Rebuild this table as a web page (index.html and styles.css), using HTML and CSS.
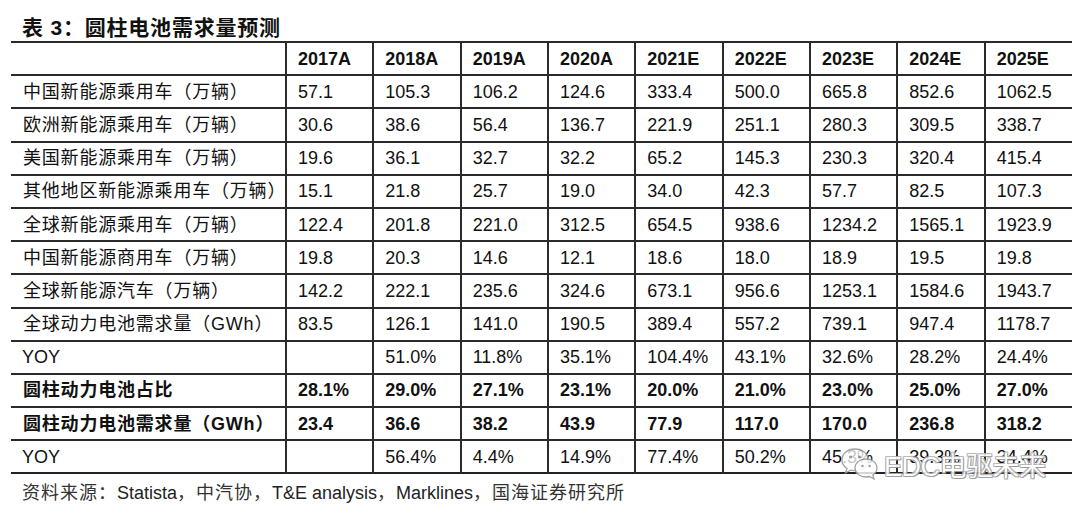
FILE: index.html
```html
<!DOCTYPE html>
<html lang="zh">
<head>
<meta charset="utf-8">
<link rel="stylesheet" href="styles.css">
</head>
<body>
<div class="page">
  <div class="title">表 3：圆柱电池需求量预测</div>
  <table class="data">
    <colgroup>
      <col class="c-label">
      <col><col><col><col><col><col><col><col><col>
    </colgroup>
    <tr class="bold">
      <td></td><td>2017A</td><td>2018A</td><td>2019A</td><td>2020A</td><td>2021E</td><td>2022E</td><td>2023E</td><td>2024E</td><td>2025E</td>
    </tr>
    <tr><td class="label">中国新能源乘用车（万辆）</td><td>57.1</td><td>105.3</td><td>106.2</td><td>124.6</td><td>333.4</td><td>500.0</td><td>665.8</td><td>852.6</td><td>1062.5</td></tr>
    <tr><td class="label">欧洲新能源乘用车（万辆）</td><td>30.6</td><td>38.6</td><td>56.4</td><td>136.7</td><td>221.9</td><td>251.1</td><td>280.3</td><td>309.5</td><td>338.7</td></tr>
    <tr><td class="label">美国新能源乘用车（万辆）</td><td>19.6</td><td>36.1</td><td>32.7</td><td>32.2</td><td>65.2</td><td>145.3</td><td>230.3</td><td>320.4</td><td>415.4</td></tr>
    <tr><td class="label">其他地区新能源乘用车（万辆）</td><td>15.1</td><td>21.8</td><td>25.7</td><td>19.0</td><td>34.0</td><td>42.3</td><td>57.7</td><td>82.5</td><td>107.3</td></tr>
    <tr><td class="label">全球新能源乘用车（万辆）</td><td>122.4</td><td>201.8</td><td>221.0</td><td>312.5</td><td>654.5</td><td>938.6</td><td>1234.2</td><td>1565.1</td><td>1923.9</td></tr>
    <tr><td class="label">中国新能源商用车（万辆）</td><td>19.8</td><td>20.3</td><td>14.6</td><td>12.1</td><td>18.6</td><td>18.0</td><td>18.9</td><td>19.5</td><td>19.8</td></tr>
    <tr><td class="label">全球新能源汽车（万辆）</td><td>142.2</td><td>222.1</td><td>235.6</td><td>324.6</td><td>673.1</td><td>956.6</td><td>1253.1</td><td>1584.6</td><td>1943.7</td></tr>
    <tr><td class="label">全球动力电池需求量（GWh）</td><td>83.5</td><td>126.1</td><td>141.0</td><td>190.5</td><td>389.4</td><td>557.2</td><td>739.1</td><td>947.4</td><td>1178.7</td></tr>
    <tr><td>YOY</td><td></td><td>51.0%</td><td>11.8%</td><td>35.1%</td><td>104.4%</td><td>43.1%</td><td>32.6%</td><td>28.2%</td><td>24.4%</td></tr>
    <tr class="bold"><td class="label">圆柱动力电池占比</td><td>28.1%</td><td>29.0%</td><td>27.1%</td><td>23.1%</td><td>20.0%</td><td>21.0%</td><td>23.0%</td><td>25.0%</td><td>27.0%</td></tr>
    <tr class="bold"><td class="label">圆柱动力电池需求量（GWh）</td><td>23.4</td><td>36.6</td><td>38.2</td><td>43.9</td><td>77.9</td><td>117.0</td><td>170.0</td><td>236.8</td><td>318.2</td></tr>
    <tr><td>YOY</td><td></td><td>56.4%</td><td>4.4%</td><td>14.9%</td><td>77.4%</td><td>50.2%</td><td>45.3%</td><td>39.3%</td><td>34.4%</td></tr>
  </table>
  <div class="source"><span class="cjk">资料来源：</span>Statista<span class="cjk">，中汽协，</span>T&amp;E analysis<span class="cjk">，</span>Marklines<span class="cjk">，国海证券研究所</span></div>

  <div class="watermark">
    <svg class="wm-icon" width="40" height="36" viewBox="0 0 40 36">
      <path d="M15 3 C7 3 2 8 2 14 C2 17.5 4 20.5 7 22.5 L5.5 27 L11 24 C12.3 24.4 13.6 24.6 15 24.6 C23 24.6 28 19.6 28 14 C28 8 23 3 15 3 Z" fill="#fff" fill-opacity="0.85" stroke="#999" stroke-width="1.3"/>
      <path d="M26 13 C19.5 13 15 17 15 22 C15 27 19.5 31 26 31 C27.2 31 28.3 30.8 29.4 30.5 L34 33 L32.8 29 C35.5 27.3 37 24.8 37 22 C37 17 32.5 13 26 13 Z" fill="#fff" fill-opacity="0.9" stroke="#999" stroke-width="1.3"/>
      <circle cx="10.5" cy="11" r="1.6" fill="#999"/>
      <circle cx="19.5" cy="11" r="1.6" fill="#999"/>
      <circle cx="22.5" cy="20" r="1.3" fill="#999"/>
      <circle cx="29.5" cy="20" r="1.3" fill="#999"/>
    </svg>
    <span class="wm-text">EDC电驱未来</span>
  </div>
</div>
</body>
</html>
```

FILE: styles.css
```css
html, body {
  margin: 0;
  padding: 0;
  background: #ffffff;
}

body {
  font-family: "Liberation Sans", "Noto Sans CJK SC", sans-serif;
  color: #111111;
}

.page {
  position: relative;
  width: 1080px;
  height: 513px;
  padding-left: 11px;
  box-sizing: border-box;
  overflow: hidden;
}

.title {
  padding-top: 14px;
  padding-left: 11px;
  height: 27px;
  line-height: 27px;
  font-size: 21px;
  font-weight: bold;
  letter-spacing: 0.8px;
  color: #111;
}

.data {
  width: 1061px;
  border-collapse: collapse;
  table-layout: fixed;
  border-top: 2px solid #222;
  border-bottom: 2px solid #222;
  font-size: 18px;
}

.data .c-label {
  width: 275px;
}

.data td {
  height: 31.2px;
  padding: 0 0 0 11px;
  border-top: 2px solid #2a2a2a;
  white-space: nowrap;
  line-height: 22px;
  vertical-align: middle;
}

.data td.label {
  padding-left: 12px;
  letter-spacing: 0.8px;
}

.data td + td {
  border-left: 2px solid #2a2a2a;
}

.data tr.bold td {
  font-weight: bold;
}

.source {
  padding-top: 8px;
  padding-left: 11px;
  font-size: 18px;
  line-height: 22px;
  color: #222;
}

.source .cjk {
  letter-spacing: 1px;
  color: #333;
}

.watermark {
  position: absolute;
  left: 840px;
  top: 446px;
  display: flex;
  align-items: center;
  gap: 4px;
  opacity: 0.9;
}

.wm-text {
  font-size: 27px;
  line-height: 30px;
  color: #ffffff;
  letter-spacing: -0.5px;
  text-shadow: 0 0 1px #666, 1px 1px 0 #999, -1px -1px 0 #bbb, 1px -1px 0 #bbb, -1px 1px 0 #bbb;
  margin-top: 5px;
}
```
